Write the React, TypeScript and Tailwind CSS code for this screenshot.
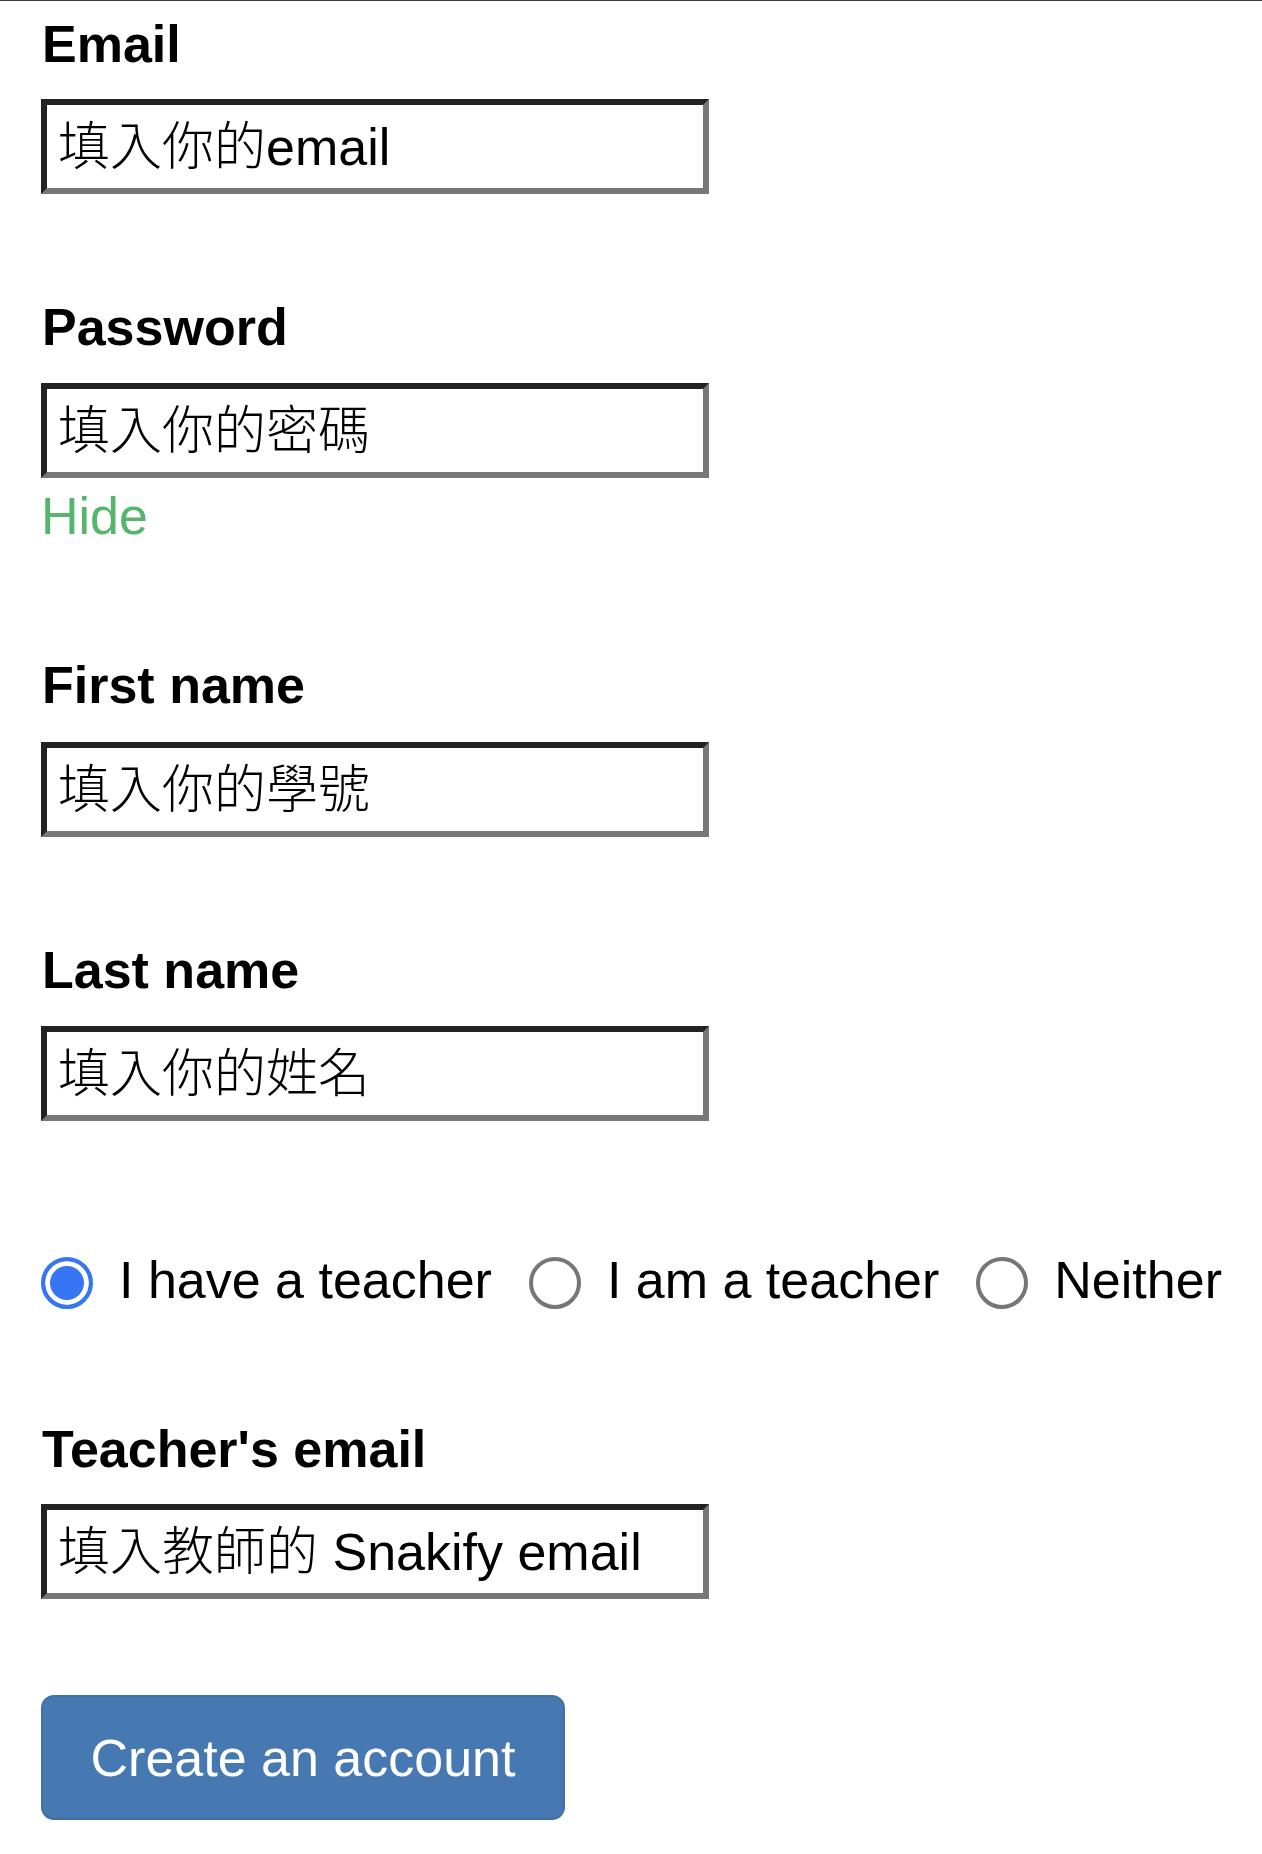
import { useState } from "react"

const font = "font-['Liberation_Sans','Noto_Sans_CJK_TC',sans-serif]"

function Field({ label, placeholder, type = "text", gap = "mt-[25px]" }: { label: string; placeholder: string; type?: string; gap?: string }) {
  return (
    <div className="flex flex-col items-start">
      <label className="pl-[1px] text-[52px] leading-[60px] font-bold text-black">{label}</label>
      <input
        type={type}
        placeholder={placeholder}
        className={`${gap} w-[668px] h-[95px] border-[6px] border-t-[#222] border-l-[#222] border-r-[#777] border-b-[#777] bg-white pl-[11px] text-[52px] font-light text-black placeholder:text-black outline-none`}
      />
    </div>
  )
}

export default function App() {
  const [role, setRole] = useState("have")

  const roles = [
    { id: "have", text: "I have a teacher" },
    { id: "am", text: "I am a teacher" },
    { id: "neither", text: "Neither" },
  ]

  return (
    <div className={`${font} min-h-[1854px] bg-white border-t border-[#3a3a3a] pl-[41px] pt-[13px]`}>
      <Field label="Email" placeholder="填入你的email" />

      <div className="mt-[103px]">
        <Field label="Password" placeholder="填入你的密碼" type="password" gap="mt-[26px]" />
        <a href="#" className="block mt-[8px] text-[52px] leading-[60px] text-[#56b46c] w-fit">
          Hide
        </a>
      </div>

      <div className="mt-[109px]">
        <Field label="First name" placeholder="填入你的學號" gap="mt-[27px]" />
      </div>

      <div className="mt-[103px]">
        <Field label="Last name" placeholder="填入你的姓名" gap="mt-[26px]" />
      </div>

      <div className="mt-[129px] flex items-center gap-[37px] h-[60px]">
        {roles.map((r) => (
          <label key={r.id} className="flex items-center gap-[26px] text-[52px] leading-[60px] text-black cursor-pointer">
            <input
              type="radio"
              name="role"
              checked={role === r.id}
              onChange={() => setRole(r.id)}
              className="appearance-none translate-y-[3px] w-[52px] h-[52px] shrink-0 rounded-full border-[4px] border-[#767676] bg-white checked:border-[#3676f5] checked:bg-[#3676f5] checked:shadow-[inset_0_0_0_5px_white]"
            />
            <span>{r.text}</span>
          </label>
        ))}
      </div>

      <div className="mt-[109px]">
        <Field label="Teacher's email" placeholder="填入教師的 Snakify email" />
      </div>

      <button className="mt-[96px] w-[524px] h-[125px] rounded-[13px] bg-[#4679b2] border-2 border-[#3f6fa6] text-white text-[52px] leading-[60px]">
        Create an account
      </button>
    </div>
  )
}
